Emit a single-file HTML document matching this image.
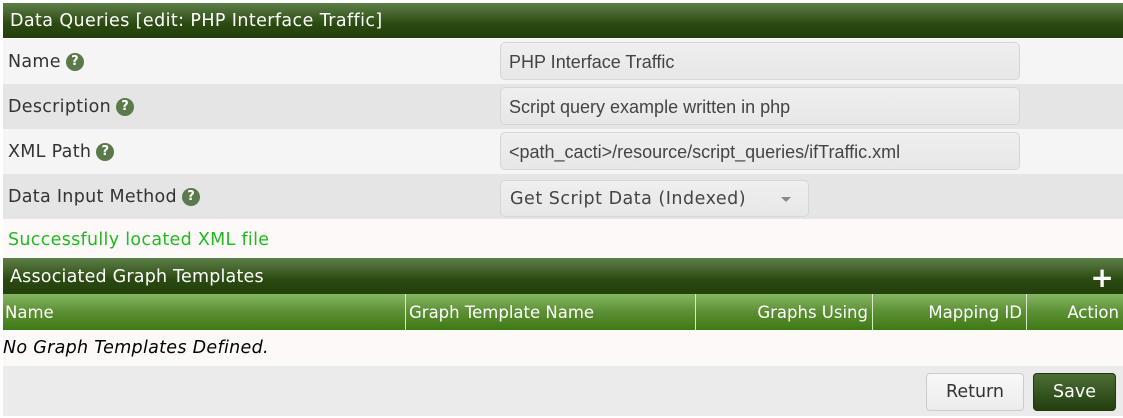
<!DOCTYPE html>
<html><head><style>
body{margin:0;width:1123px;height:418px;background:#fff;font-family:"DejaVu Sans","Liberation Sans",sans-serif;position:relative;overflow:hidden}
.a{position:absolute}
.hdr{left:3px;width:1120px;background:linear-gradient(#5e7f48,#2a4a10 60%,#233f0c);color:#fff;font-size:17.5px;letter-spacing:0.4px}
.row{left:3px;width:1120px;height:45px;font-size:17.5px;color:#333;letter-spacing:0.3px}
.row>span{position:absolute;left:5px;top:13px}
.q{display:inline-block;width:18px;height:18px;border-radius:50%;background:#5b7a4b;color:#fff;font-size:13px;font-weight:bold;text-align:center;line-height:18px;vertical-align:-1px;margin-left:5px;font-style:normal;letter-spacing:0;position:relative;top:-3px}
.inp{position:absolute;left:497px;width:520px;height:38px;border:1px solid #d6d6d6;border-radius:5px;background:linear-gradient(#efefef,#e7e7e7);font-family:"Liberation Sans",sans-serif;font-size:18px;color:#444;box-sizing:border-box;padding:9px 8px;letter-spacing:0}
.col{top:294px;height:36px;background:linear-gradient(#86b562,#5b8f34 50%,#3f7a14);color:#fff;font-size:16.5px;line-height:38px;box-sizing:border-box;border-right:1px solid #d8e8c8;white-space:nowrap}
</style></head><body>
<div class="a hdr" style="top:3px;height:35px;line-height:37px;padding-left:7px;box-sizing:border-box">Data Queries [edit: PHP Interface Traffic]</div>
<div class="a row" style="top:39px;background:#f5f5f5"><span>Name<i class="q">?</i></span><div class="inp" style="top:3px">PHP Interface Traffic</div></div>
<div class="a row" style="top:84px;background:#e5e5e5"><span>Description<i class="q">?</i></span><div class="inp" style="top:3px">Script query example written in php</div></div>
<div class="a row" style="top:129px;background:#f5f5f5"><span>XML Path<i class="q">?</i></span><div class="inp" style="top:3px">&lt;path_cacti&gt;/resource/script_queries/ifTraffic.xml</div></div>
<div class="a row" style="top:174px;background:#e5e5e5"><span>Data Input Method<i class="q">?</i></span><div class="inp" style="top:6px;width:309px;height:37px;font-family:'DejaVu Sans',sans-serif;font-size:17.5px;padding:8px 9px;white-space:nowrap;letter-spacing:0.5px">Get Script Data (Indexed)<span class="a" style="left:280px;top:16px;width:0;height:0;border-left:5px solid transparent;border-right:5px solid transparent;border-top:5px solid #888"></span></div></div>
<div class="a" style="left:3px;top:219px;width:1120px;height:39px;background:#fdf9f8"><span class="a" style="left:5px;top:11px;color:#22b922;font-size:17.5px;letter-spacing:0.3px">Successfully located XML file</span></div>
<div class="a hdr" style="top:258px;height:36px;line-height:38px;padding-left:7px;box-sizing:border-box;letter-spacing:0.2px">Associated Graph Templates<span class="a" style="right:9px;top:0;font-size:28px;font-weight:bold;line-height:40px">+</span></div>
<div class="a col" style="left:3px;width:403px;padding-left:2px">Name</div>
<div class="a col" style="left:406px;width:290px;padding-left:3px">Graph Template Name</div>
<div class="a col" style="left:696px;width:177px;text-align:right;padding-right:4px">Graphs Using</div>
<div class="a col" style="left:873px;width:154px;text-align:right;padding-right:4px">Mapping ID</div>
<div class="a col" style="left:1027px;width:96px;text-align:right;padding-right:4px;border-right:none">Action</div>
<div class="a" style="left:3px;top:330px;width:1120px;height:36px;background:#fdf9f8"><span class="a" style="left:0;top:8px;font-style:italic;font-size:17.5px;color:#000;letter-spacing:0.3px">No Graph Templates Defined.</span></div>
<div class="a" style="left:3px;top:366px;width:1120px;height:50px;background:#ebebeb">
<div class="a" style="left:923px;top:7px;width:98px;height:38px;border:1px solid #ccc;border-radius:4px;background:linear-gradient(#f8f8f8,#ececec);box-sizing:border-box;text-align:center;line-height:36px;font-size:17.5px;color:#333">Return</div>
<div class="a" style="left:1030px;top:7px;width:83px;height:38px;border:1px solid #1e3a0a;border-radius:4px;background:linear-gradient(#4d6d36,#223f0d);box-sizing:border-box;text-align:center;line-height:36px;font-size:17.5px;color:#fff">Save</div>
</div>
</body></html>
